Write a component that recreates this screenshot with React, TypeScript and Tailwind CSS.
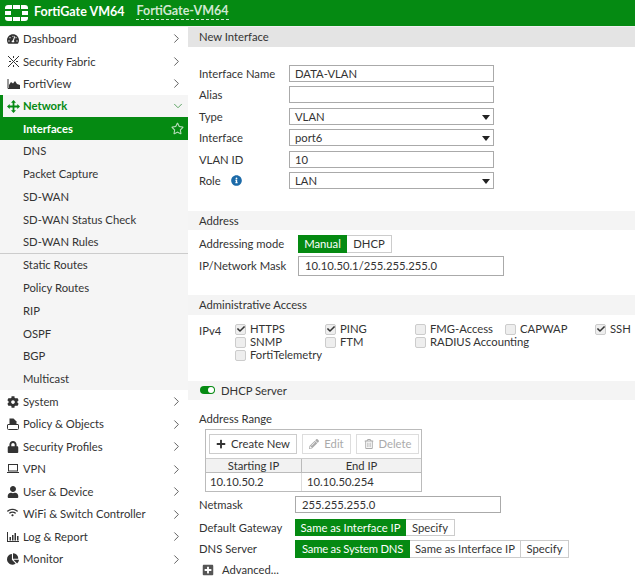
import React from "react";
import { FaTachometerAlt, FaCog, FaLock, FaUser, FaWifi, FaPlus, FaPencilAlt, FaRegTrashAlt, FaInfoCircle, FaRegStar, FaCheck, FaChartPie, FaPlusSquare } from "react-icons/fa";
import { LuChevronRight, LuChevronDown } from "react-icons/lu";

const Chevron = () => <LuChevronRight className="ml-auto mr-[4px] text-[15px] text-[#555]" strokeWidth={1.5} />;

function Logo() {
  return (
    <svg width="25" height="18" viewBox="0 0 25 18" className="mr-[2px]">
      <g fill="#fff">
        <path d="M8 1h-4a3 3 0 0 0-3 3v1h7z" />
        <rect x="9" y="1" width="7" height="4" />
        <path d="M17 1h4a3 3 0 0 1 3 3v1h-7z" />
        <rect x="1" y="7" width="6" height="4" />
        <rect x="18" y="7" width="6" height="4" />
        <path d="M8 17h-4a3 3 0 0 1-3-3v-1h7z" />
        <rect x="9" y="13" width="7" height="4" />
        <path d="M17 17h4a3 3 0 0 0 3-3v-1h-7z" />
      </g>
    </svg>
  );
}

function FabricIcon() {
  return (
    <svg width="13" height="13" viewBox="0 0 13 13" fill="none" stroke="#333" strokeWidth="1">
      <path d="M1 1l3 3M12 1L9 4M1 12l3-3M12 12L9 9M2 6.5h2M9 6.5h2M6.5 1v2M6.5 10v2M4 4l5 5M9 4l-5 5" />
    </svg>
  );
}
function ViewIcon() {
  return (
    <svg width="13" height="12" viewBox="0 0 13 12">
      <path d="M1 1v9.5h12" fill="none" stroke="#333" strokeWidth="1" />
      <path d="M2 10V7l2-3 2 1.500L8 3l2 3 3 1v3z" fill="#333" />
    </svg>
  );
}
function MoveIcon() {
  return (
    <svg width="13" height="13" viewBox="0 0 13 13" fill="#058a12">
      <path d="M6.500 0L9 2.700H7.400v2.900h2.900V4L13 6.500 10.300 9V7.400H7.400v2.900H9L6.500 13 4 10.300h1.600V7.400H2.700V9L0 6.500 2.700 4v1.600h2.900V2.700H4z" />
    </svg>
  );
}
function VpnIcon() {
  return (
    <svg width="12" height="10" viewBox="0 0 12 10" fill="none" stroke="#333">
      <rect x="1.500" y="0.500" width="9" height="6.500" />
      <path d="M0 8.500h12" />
    </svg>
  );
}
function LogIcon() {
  return (
    <svg width="12" height="10" viewBox="0 0 12 10" fill="#333">
      <path d="M0 0h1v9h11v1H0z" />
      <rect x="2.500" y="5" width="1.500" height="3.500" />
      <rect x="5" y="3" width="1.500" height="5.500" />
      <rect x="7.500" y="1" width="1.500" height="7.500" />
      <rect x="10" y="4" width="1.500" height="4.500" />
    </svg>
  );
}
function PolicyIcon() {
  return (
    <svg width="12" height="12" viewBox="0 0 12 12">
      <path d="M2.500 0.500h4l3 3v3h-7z" fill="#333" />
      <path d="M1 6.500h10a.6.6 0 0 1 .5.6v3.400a1 1 0 0 1-1 1h-9a1 1 0 0 1-1-1V7a.6.6 0 0 1 .5-.5z" fill="#fff" stroke="#333" />
    </svg>
  );
}

const Row = ({ icon, label }: { icon: React.ReactNode; label: string }) => (
  <div className="flex h-[22.500px] items-center bg-white pl-[7px]">
    <span className="flex w-[16px] shrink-0 items-center text-[12px] text-[#333]">{icon}</span>
    <span>{label}</span>
    <Chevron />
  </div>
);
const TopRow = ({ icon, label }: { icon: React.ReactNode; label: string }) => (
  <div className="flex h-[22.400px] items-center bg-white pl-[7px]">
    <span className="flex w-[16px] shrink-0 items-center text-[12px] text-[#333]">{icon}</span>
    <span>{label}</span>
    <Chevron />
  </div>
);
const Sub = ({ label, cls = "" }: { label: string; cls?: string }) => (
  <div className={`flex h-[22.800px] items-center pl-[23px] ${cls}`}>{label}</div>
);

const SectionHead = ({ children, cls = "bg-[#f4f4f4]" }: { children: React.ReactNode; cls?: string }) => (
  <div className={`flex h-[19.500px] items-center pl-[11px] ${cls}`}>{children}</div>
);

const Field = ({ label, children }: { label: React.ReactNode; children?: React.ReactNode }) => (
  <div className="flex h-[21.500px] items-center pl-[11px]">
    <div className="flex w-[90px] shrink-0 items-center">{label}</div>
    {children}
  </div>
);
const Input = ({ v = "", select = false }: { v?: string; select?: boolean }) => (
  <div className="relative flex h-[17px] w-[205px] items-center border border-[#aaa] bg-white pl-[5px]">
    {v}
    {select && <span className="absolute right-[3px] top-[6px] h-0 w-0 border-x-[4px] border-t-[5px] border-x-transparent border-t-[#222]" />}
  </div>
);
const Btn = ({ children, on = false, w }: { children: React.ReactNode; on?: boolean; w: string }) => (
  <div className={`flex h-[17.500px] items-center justify-center ${w} ${on ? "bg-[#058a12] text-white" : "border border-l-0 border-[#ccc] bg-white"}`}>{children}</div>
);
const Check = ({ label, on = false, w }: { label: string; on?: boolean; w: string }) => (
  <div className={`flex h-[13px] items-center ${w}`}>
    <span className="mr-[4px] flex h-[11px] w-[11px] shrink-0 items-center justify-center rounded-[2px] border border-[#ccc] bg-[#eee] text-[8px] text-[#333]">
      {on && <FaCheck />}
    </span>
    {label}
  </div>
);
const ToolBtn = ({ children, off = false, cls = "" }: { children: React.ReactNode; off?: boolean; cls?: string }) => (
  <div className={`flex h-[20px] items-center justify-center border ${off ? "border-[#ddd] text-[#aaa]" : "border-[#ccc] text-[#333]"} ${cls}`}>{children}</div>
);

export default function App() {
  return (
    <div className="h-[583px] w-[635px] overflow-hidden bg-white text-[11.250px] leading-none text-[#333] [font-family:Lato,sans-serif]">
      <div className="flex h-[27px] items-center border-b border-[#f0f0f0] bg-[#058a12] pb-[1px] pl-[4px]">
        <Logo />
        <span className="ml-[3px] text-[12.500px] font-bold text-white">FortiGate VM64</span>
        <span className="ml-[12px] border-b border-dashed border-[#cfe8d0] pb-[1px] text-[12.500px] font-bold text-[#cfe8d0]">FortiGate-VM64</span>
      </div>
      <div className="flex">
        <div className="w-[188px] shrink-0 pt-[0.600px]">
          <TopRow icon={<FaTachometerAlt />} label="Dashboard" />
          <TopRow icon={<FabricIcon />} label="Security Fabric" />
          <TopRow icon={<ViewIcon />} label="FortiView" />
          <div className="flex h-[22.600px] items-center border-l-[3px] border-[#058a12] bg-[#f5f5f5] pl-[4px] font-bold text-[#058a12]">
            <span className="flex w-[16px] shrink-0 items-center"><MoveIcon /></span>
            <span>Network</span>
            <LuChevronDown className="ml-auto mr-[3px] text-[14px] text-[#4a9a52]" strokeWidth={1.5} />
          </div>
          <div className="bg-[#f5f5f5]">
            <div className="flex h-[22.200px] items-center bg-[#058a12] pl-[23px] pr-[4px] font-bold text-white">
              Interfaces
              <FaRegStar className="ml-auto text-[13px] text-[#b8dcbb]" />
            </div>
            <Sub label="DNS" />
            <Sub label="Packet Capture" />
            <Sub label="SD-WAN" />
            <Sub label="SD-WAN Status Check" />
            <Sub label="SD-WAN Rules" cls="border-b border-[#ccc]" />
            <Sub label="Static Routes" />
            <Sub label="Policy Routes" />
            <Sub label="RIP" />
            <Sub label="OSPF" />
            <Sub label="BGP" />
            <Sub label="Multicast" />
          </div>
          <Row icon={<FaCog />} label="System" />
          <Row icon={<PolicyIcon />} label="Policy & Objects" />
          <Row icon={<FaLock />} label="Security Profiles" />
          <Row icon={<VpnIcon />} label="VPN" />
          <Row icon={<FaUser />} label="User & Device" />
          <Row icon={<FaWifi className="-mt-[3px] text-[11px]" />} label="WiFi & Switch Controller" />
          <Row icon={<LogIcon />} label="Log & Report" />
          <Row icon={<FaChartPie />} label="Monitor" />
        </div>

        <div className="min-w-0 flex-1">
          <SectionHead cls="bg-[#e4e4e4]">New Interface</SectionHead>
          <div className="pt-[16px]">
            <Field label="Interface Name"><Input v="DATA-VLAN" /></Field>
            <Field label="Alias"><Input /></Field>
            <Field label="Type"><Input v="VLAN" select /></Field>
            <Field label="Interface"><Input v="port6" select /></Field>
            <Field label="VLAN ID"><Input v="10" /></Field>
            <Field label={<>Role<FaInfoCircle className="ml-[10px] text-[11px] text-[#1c6aa8]" /></>}><Input v="LAN" select /></Field>
          </div>
          <div className="mt-[19px]">
            <SectionHead>Address</SectionHead>
            <div className="pt-[5px]">
              <div className="flex h-[20px] items-start pl-[11px]">
                <span className="flex h-[17.500px] w-[99px] items-center">Addressing mode</span>
                <Btn on w="w-[49px]">Manual</Btn>
                <Btn w="w-[45px]">DHCP</Btn>
              </div>
              <div className="flex h-[21px] items-center pl-[11px]">
                <span className="w-[99px]">IP/Network Mask</span>
                <div className="flex h-[20px] w-[206px] items-center border border-[#aaa] pl-[6px]">10.10.50.1/255.255.255.0</div>
              </div>
            </div>
          </div>
          <div className="mt-[19px]">
            <SectionHead>Administrative Access</SectionHead>
            <div className="flex pl-[11px] pt-[8px]">
              <span className="w-[36px] pt-[2px]">IPv4</span>
              <div>
                <div className="flex">
                  <Check label="HTTPS" on w="w-[90px]" />
                  <Check label="PING" on w="w-[90px]" />
                  <Check label="FMG-Access" w="w-[90px]" />
                  <Check label="CAPWAP" w="w-[90px]" />
                  <Check label="SSH" on w="w-[40px]" />
                </div>
                <div className="flex">
                  <Check label="SNMP" w="w-[90px]" />
                  <Check label="FTM" w="w-[90px]" />
                  <Check label="RADIUS Accounting" w="w-[130px]" />
                </div>
                <Check label="FortiTelemetry" w="w-[120px]" />
              </div>
            </div>
          </div>
          <div className="mt-[19px]">
            <SectionHead>
              <span className="relative ml-[1px] mr-[6px] inline-block h-[8px] w-[15px] rounded-full bg-[#058a12]">
                <span className="absolute right-[1px] top-[1px] h-[6px] w-[6px] rounded-full bg-white" />
              </span>
              DHCP Server
            </SectionHead>
            <div className="pl-[11px] pt-[13px]">
              <div className="h-[16px]">Address Range</div>
              <div className="ml-[6px] h-[63px] w-[217px] border border-[#bbb]">
                <div className="flex h-[29px] items-center gap-[5px] border-b border-[#ccc] pl-[3px]">
                  <ToolBtn cls="w-[88px]"><FaPlus className="mr-[5px] text-[10px]" />Create New</ToolBtn>
                  <ToolBtn off cls="w-[49px]"><FaPencilAlt className="mr-[5px] text-[10px]" />Edit</ToolBtn>
                  <ToolBtn off cls="w-[63px]"><FaRegTrashAlt className="mr-[5px] text-[10px]" />Delete</ToolBtn>
                </div>
                <div className="flex h-[14px] items-center border-b border-[#bbb] bg-[#f2f2f2] text-center">
                  <span className="w-[96px] border-r border-[#bbb] leading-[13px]">Starting IP</span>
                  <span className="flex-1">End IP</span>
                </div>
                <div className="flex h-[18px] items-center">
                  <span className="w-[96px] self-stretch border-r border-[#ddd] pl-[4px] leading-[18px]">10.10.50.2</span>
                  <span className="pl-[5px]">10.10.50.254</span>
                </div>
              </div>
            </div>
            <div className="pl-[11px] pt-[4px]">
              <div className="flex h-[22.500px] items-start">
                <span className="flex h-[17px] w-[96px] items-center">Netmask</span>
                <div className="flex h-[17px] w-[206px] items-center border border-[#aaa] pl-[6px]">255.255.255.0</div>
              </div>
              <div className="flex h-[21.500px] items-start">
                <span className="flex h-[17.500px] w-[96px] items-center">Default Gateway</span>
                <Btn on w="w-[111px]">Same as Interface IP</Btn>
                <Btn w="w-[49px]">Specify</Btn>
              </div>
              <div className="flex h-[23.500px] items-start">
                <span className="flex h-[17.500px] w-[96px] items-center">DNS Server</span>
                <Btn on w="w-[115px] tracking-[-0.2px]">Same as System DNS</Btn>
                <Btn w="w-[111px]">Same as Interface IP</Btn>
                <Btn w="w-[48px]">Specify</Btn>
              </div>
              <div className="flex items-center pl-[3px]">
                <FaPlusSquare className="mr-[8px] text-[12px] text-[#555]" />Advanced...
              </div>
            </div>
          </div>
        </div>
      </div>
    </div>
  );
}
